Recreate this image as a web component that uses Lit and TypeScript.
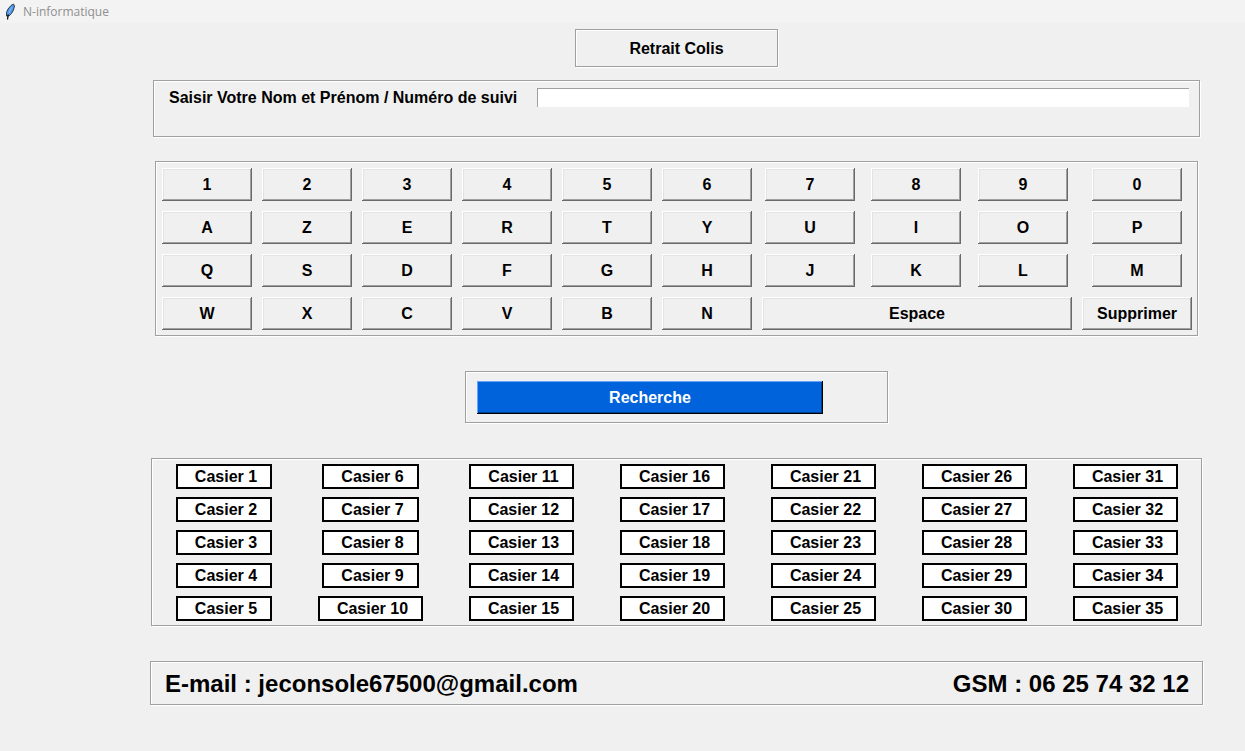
import { LitElement, html, css } from "lit";
import { customElement, state } from "lit/decorators.js";

const KEYS = [
  "1234567890",
  "AZERTYUIOP",
  "QSDFGHJKLM",
  "WXCVBN",
].join("").split("");

const LOCKERS = Array.from({ length: 35 }, (_, i) => i + 1);

@customElement("app-root")
export class AppRoot extends LitElement {
  static styles = css`
    :host {
      display: block;
      min-height: 100vh;
      background: #f0f0f0;
      color: #000;
      font: bold 16px/18px "Liberation Sans", Arial, sans-serif;
    }
    * {
      box-sizing: border-box;
    }
    .titlebar {
      display: flex;
      align-items: center;
      gap: 4px;
      height: 23px;
      padding: 0 4px;
      background: #f3f3f3;
      color: #8f8f8f;
      font: 12px/16px "Open Sans", "Noto Sans", sans-serif;
    }
    .feather {
      width: 15px;
      height: 18px;
      flex: none;
    }
    .content {
      display: flex;
      flex-direction: column;
      align-items: stretch;
      padding: 6px 42px 24px 150px;
    }
    .frame {
      border: 1px solid #a0a0a0;
      box-shadow: 1px 1px 0 #fff, inset 1px 1px 0 #fff;
    }
    .heading {
      align-self: center;
      margin: 0;
      padding: 10px 53px 8px;
      font: inherit;
    }
    .search {
      display: flex;
      align-items: flex-start;
      gap: 20px;
      margin: 13px 3px 0;
      padding: 7px 10px 29px 15px;
    }
    .caption {
      padding-top: 1px;
    }
    .entry {
      flex: 1;
      min-width: 0;
      height: 19px;
      padding: 0 2px;
      border: 0;
      outline: 0;
      border-radius: 0;
      background: #fff;
      box-shadow: inset 1px 1px 0 #a0a0a0;
      font: inherit;
    }
    .keyboard {
      display: grid;
      grid-template-columns: repeat(6, 100fr) 106fr 106fr 108fr 120fr;
      margin: 24px 5px 0;
      padding: 1px 0 0 1px;
    }
    .key,
    .submit {
      height: 33px;
      padding: 0;
      border: 0;
      border-radius: 0;
      font: inherit;
    }
    .key {
      justify-self: center;
      width: 90px;
      margin: 5px;
      background: #f0f0f0;
      color: #000;
      box-shadow: inset -1px -1px 0 #696969, inset 1px 1px 0 #fff,
        inset -2px -2px 0 #a0a0a0, inset 2px 2px 0 #e3e3e3;
    }
    .wide {
      justify-self: stretch;
      width: auto;
    }
    .space {
      grid-column: span 3;
    }
    .action {
      align-self: center;
      margin-top: 35px;
      padding: 9px 64px 8px 11px;
    }
    .submit {
      display: block;
      width: 346px;
      background: #0063dc;
      color: #fff;
      box-shadow: inset -1px -1px 0 #000, inset 1px 1px 0 #62a5ff,
        inset -2px -2px 0 #003f8c;
    }
    .lockers {
      display: grid;
      grid-template: repeat(5, auto) / 142fr repeat(6, 151fr);
      grid-auto-flow: column;
      justify-items: center;
      margin: 35px 1px 0;
      padding: 1px 0 0 1px;
      list-style: none;
    }
    .locker {
      margin: 4px 0;
      padding: 2px 13px 1px 17px;
      border: 2px solid #000;
      background: #fff;
      white-space: nowrap;
    }
    .contact {
      display: flex;
      justify-content: space-between;
      margin-top: 35px;
      padding: 8px 13px 6px 14px;
      font-size: 24px;
      line-height: 28px;
    }
    .mail {
      color: inherit;
      text-decoration: none;
    }
  `;

  @state() private query = "";

  private onInput(e: Event) {
    this.query = (e.target as HTMLInputElement).value;
  }

  render() {
    return html`
      <header class="titlebar">
        <svg class="feather" viewBox="0 0 15 18" aria-hidden="true">
          <path d="M9.500 1 L7 2.500 L4 6 L2.500 9.500 L2.500 13 L5 13 L7.500 10.500 L9.500 7 L10.500 3 Z" fill="#4f97ee" stroke="#26303a" stroke-width="0.900" />
          <path d="M4.200 11.500 L3.500 16.500" fill="none" stroke="#000" stroke-width="1.200" />
          <path d="M7.500 4.500 L5 10" fill="none" stroke="#9cc8ff" stroke-width="0.800" />
        </svg>
        <span>N-informatique</span>
      </header>
      <main class="content">
        <h1 class="frame heading">Retrait Colis</h1>
        <div class="frame search">
          <label class="caption" for="query">Saisir Votre Nom et Prénom / Numéro de suivi</label>
          <input id="query" class="entry" type="text" .value=${this.query} @input=${this.onInput} />
        </div>
        <div class="frame keyboard">
          ${KEYS.map(
            (k) => html`<button type="button" class="key" @click=${() => (this.query += k)}>${k}</button>`
          )}
          <button type="button" class="key wide space" @click=${() => (this.query += " ")}>Espace</button>
          <button type="button" class="key wide" @click=${() => (this.query = this.query.slice(0, -1))}>Supprimer</button>
        </div>
        <div class="frame action">
          <button type="button" class="submit">Recherche</button>
        </div>
        <ul class="frame lockers">
          ${LOCKERS.map((n) => html`<li class="locker">Casier ${n}</li>`)}
        </ul>
        <footer class="frame contact">
          <span>E-mail : <a class="mail" href="mailto:jeconsole67500@gmail.com">jeconsole67500@gmail.com</a></span>
          <span>GSM : 06 25 74 32 12</span>
        </footer>
      </main>
    `;
  }
}
